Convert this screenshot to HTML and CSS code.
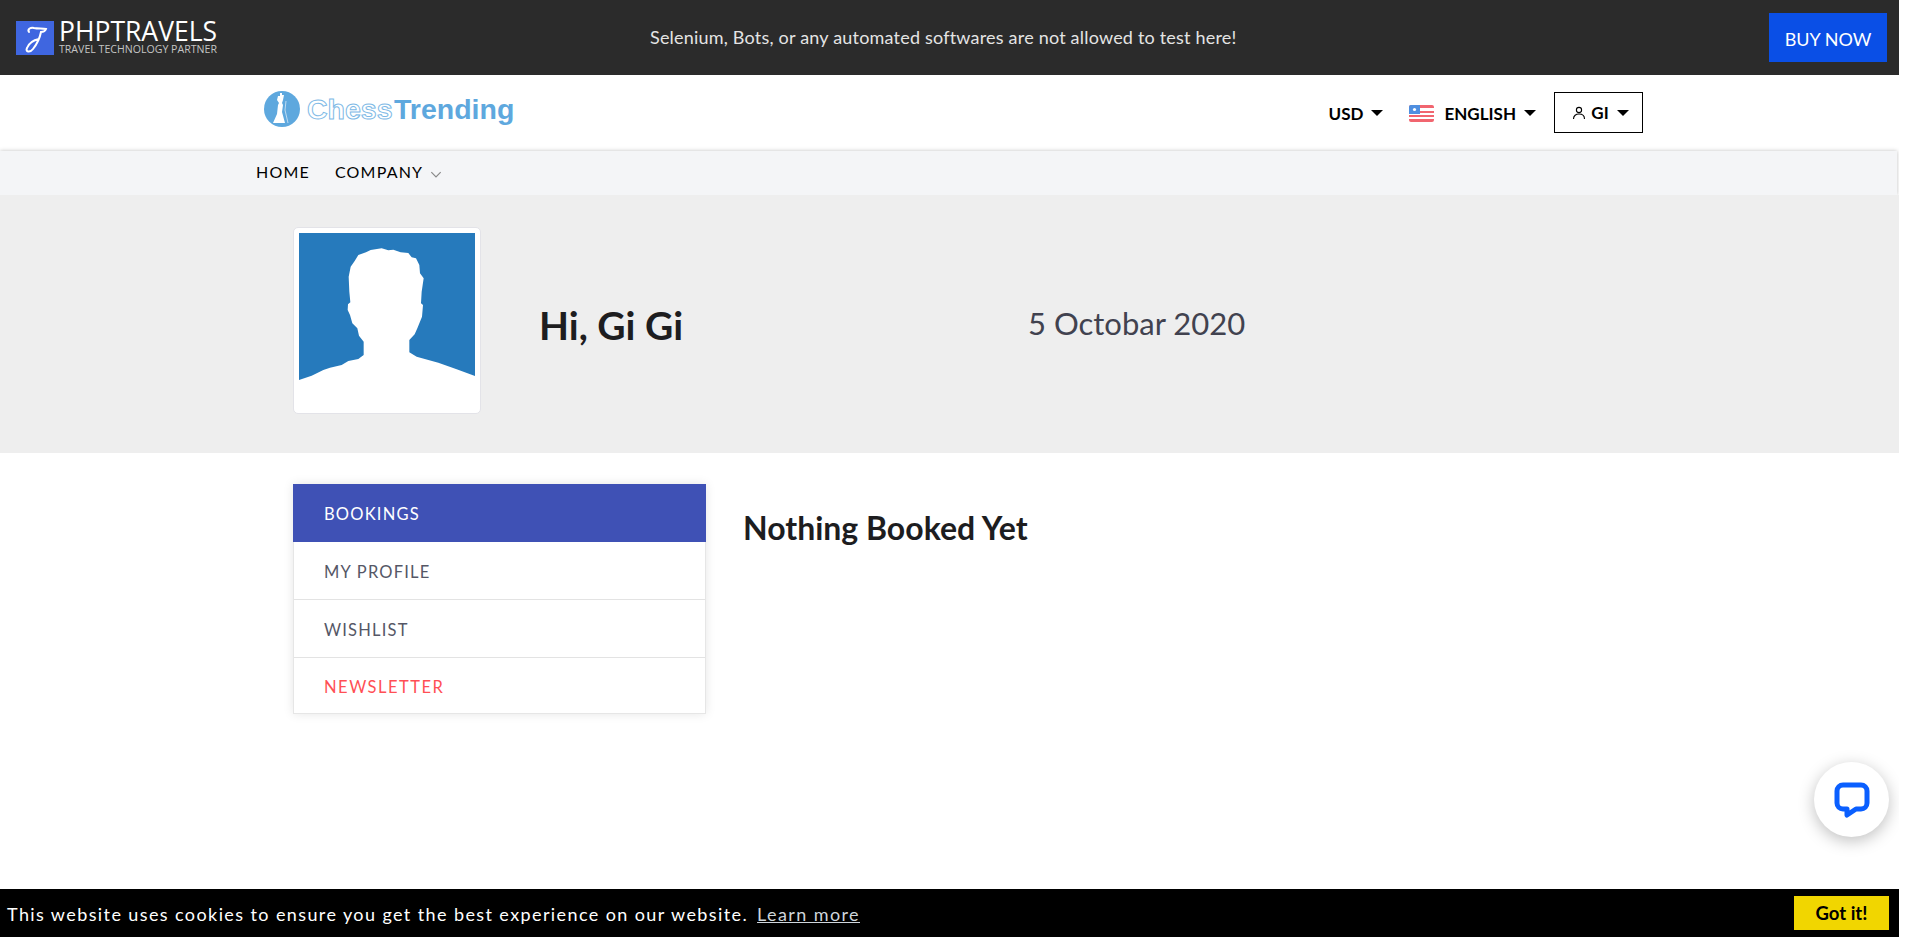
FILE: index.html
```html
<!DOCTYPE html>
<html lang="en">
<head>
    <meta charset="UTF-8">
    <meta name="viewport" content="width=device-width, initial-scale=1.0">
    <title>Dashboard</title>
    <link rel="stylesheet" href="styles.css">
</head>
<body>
    <div class="page">
        <div class="topbar">
            <a class="php-logo" href="#">
                <svg class="php-mark" viewBox="0 0 38 34">
                    <rect width="38" height="34" fill="#3f66e0"/>
                    <path d="M13 11c-2-3 2-5 5-4 4 1 9 0 12 1-1 3-3 3-5 3-1 5-4 12-8 17-3 4-8 3-6-1 2-5 7-8 12-9" fill="none" stroke="#fff" stroke-width="2" stroke-linecap="round"/>
                </svg>
                <span class="php-text">
                    <span class="php-name">PHPTRAVELS</span>
                    <span class="php-sub">TRAVEL TECHNOLOGY PARTNER</span>
                </span>
            </a>
            <div class="topbar-msg">Selenium, Bots, or any automated softwares are not allowed to test here!</div>
            <a class="buy-btn" href="#">BUY NOW</a>
        </div>

        <header class="mainbar">
            <a class="chess-logo" href="#">
                <svg viewBox="0 0 256 40" width="256" height="40">
                    <circle cx="18" cy="19" r="18" fill="#5ea8de"/>
                    <path d="M16 3h2v2h2l-1 5-1 3 1 2-1 7 3 11H9l4-9 1-9 1-2-2-3 1-4h2z" fill="#fff"/>
                    <path d="M22 11l-1 9 3 13" fill="none" stroke="#d5e8f6" stroke-width="0.8"/>
                    <text class="chess-word" x="43" y="29">Chess</text>
                    <text class="trending-word" x="130" y="29">Trending</text>
                </svg>
            </a>
            <div class="mainbar-right">
                <a class="drop" href="#">USD <span class="caret"></span></a>
                <a class="drop drop-lang" href="#">
                    <svg class="flag" viewBox="0 0 25 17">
                        <rect width="25" height="17" rx="2" fill="#fff"/>
                        <path d="M0 2a2 2 0 0 1 2-2h21a2 2 0 0 1 2 2v1H0zM0 6h25v2H0zM0 10h25v2H0zM0 14h25v1a2 2 0 0 1-2 2H2a2 2 0 0 1-2-2z" fill="#f1656f"/>
                        <path d="M0 2a2 2 0 0 1 2-2h9v9H0z" fill="#4f8fe0"/>
                        <circle cx="5.5" cy="4.500" r="1.6" fill="#fff"/>
                    </svg>
                    ENGLISH <span class="caret"></span>
                </a>
                <a class="drop user-box" href="#">
                    <svg class="user-icon" viewBox="0 0 14 14">
                        <circle cx="7" cy="4" r="2.6" fill="none" stroke="#000" stroke-width="1.1"/>
                        <path d="M1.5 13c0-3.4 2.4-5 5.500-5s5.500 1.600 5.500 5" fill="none" stroke="#000" stroke-width="1.1"/>
                    </svg>
                    GI <span class="caret"></span>
                </a>
            </div>
        </header>

        <nav class="menubar">
            <a href="#">HOME</a>
            <a href="#">COMPANY <svg class="chev" viewBox="0 0 10 6"><path d="M1 1l4 4 4-4" fill="none" stroke="#888" stroke-width="1"/></svg></a>
        </nav>

        <section class="hero">
            <div class="avatar">
                <svg viewBox="57 54 528 528" width="176" height="176">
                    <rect x="57" y="54" width="528" height="528" fill="#267abc"/>
                    <path d="M57 495L95 482 130 465 150 458 185 450 205 438 235 432 251 420 251 380 237 362 232 340 217 325 210 300 203 285 204 268 211 262 208 230 206 185 212 155 224 138 235 120 258 112 272 105 305 100 325 106 340 104 362 112 385 114 395 127 408 130 418 150 420 175 431 190 425 230 423 265 429 270 426 305 412 340 404 358 388 375 388 412 410 425 475 443 530 463 585 483 585 582 57 582Z" fill="#fff"/>
                </svg>
            </div>
            <h1 class="hero-name">Hi, Gi Gi</h1>
            <div class="hero-date">5 Octobar 2020</div>
        </section>

        <main class="content">
            <ul class="side-menu">
                <li class="active"><a href="#">BOOKINGS</a></li>
                <li><a href="#">MY PROFILE</a></li>
                <li><a href="#">WISHLIST</a></li>
                <li class="danger"><a href="#">NEWSLETTER</a></li>
            </ul>
            <h2 class="empty-title">Nothing Booked Yet</h2>
        </main>

        <a class="chat-btn" href="#">
            <svg viewBox="0 0 36 36" width="36" height="36">
                <path d="M9 3h18a6 6 0 0 1 6 6v12a6 6 0 0 1-6 6h-5l-9 6v-6H9a6 6 0 0 1-6-6V9a6 6 0 0 1 6-6z" fill="none" stroke="#0a5fff" stroke-width="5" stroke-linejoin="round"/>
            </svg>
        </a>

        <div class="cookie-bar">
            <span class="cookie-msg">This website uses cookies to ensure you get the best experience on our website. <a href="#">Learn more</a></span>
            <a class="cookie-btn" href="#">Got it!</a>
        </div>
    </div>
</body>
</html>
```

FILE: styles.css
```css
:root {
    --text-font: Lato, "Open Sans", sans-serif;
    --dark: #2b2b2b;
    --menu-bg: #f4f5f7;
    --hero-bg: #eeeeee;
    --indigo: #3f51b5;
}

* {
    box-sizing: border-box;
}

html, body {
    margin: 0;
    background: #fff;
}

body {
    font-family: var(--text-font);
    color: #000;
    overflow: hidden;
}

a {
    color: inherit;
    text-decoration: none;
}

.page {
    position: relative;
    width: 1899px;
    height: 937px;
    overflow: hidden;
}

/* top strip */
.topbar {
    display: flex;
    align-items: center;
    height: 75px;
    padding: 0 12px 0 16px;
    background: var(--dark);
}

.php-logo {
    display: flex;
    align-items: center;
    gap: 5px;
    width: 202px;
    white-space: nowrap;
}

.php-mark {
    width: 38px;
    height: 34px;
}

.php-text {
    display: flex;
    flex-direction: column;
    font-family: "Open Sans", sans-serif;
}

.php-name {
    font-size: 26.500px;
    line-height: 24px;
    color: #fff;
}

.php-sub {
    font-size: 10.6px;
    line-height: 13px;
    color: #c4c4c4;
}

.topbar-msg {
    margin: -2px 0 0 432px;
    font-size: 18px;
    letter-spacing: 0.2px;
    color: #e4e4e4;
    white-space: nowrap;
}

.buy-btn {
    display: flex;
    align-items: center;
    justify-content: center;
    width: 118px;
    height: 49px;
    margin-left: auto;
    padding-top: 3px;
    background: #0a4fe6;
    color: #fff;
    font-size: 18px;
}

/* logo row */
.mainbar {
    display: flex;
    align-items: center;
    justify-content: space-between;
    height: 76px;
    padding: 0 256px 0 264px;
}

.chess-logo {
    display: block;
    height: 40px;
    margin-top: -6px;
}

.chess-word, .trending-word {
    font-family: "Liberation Sans", Arial, sans-serif;
    font-weight: 700;
    font-size: 28.500px;
}

.chess-word {
    fill: #fff;
    stroke: #7db9e6;
    stroke-width: 1;
}

.trending-word {
    fill: #5ea8de;
}

.mainbar-right {
    display: flex;
    align-items: center;
}

.drop {
    display: flex;
    align-items: center;
    font-size: 17px;
    font-weight: 700;
    color: #000;
}

.drop-lang {
    margin-left: 26px;
}

.flag {
    width: 25px;
    height: 17px;
    margin-right: 10px;
}

.caret {
    display: inline-block;
    width: 0;
    height: 0;
    margin-left: 8px;
    border-left: 6px solid transparent;
    border-right: 6px solid transparent;
    border-top: 6px solid #000;
}

.user-box {
    justify-content: center;
    width: 89px;
    height: 41px;
    margin-left: 18px;
    margin-top: -1px;
    padding-left: 4px;
    border: 1px solid #000;
}

.user-icon {
    width: 14px;
    height: 14px;
    margin-right: 5px;
}

/* menu */
.menubar {
    position: relative;
    display: flex;
    align-items: center;
    gap: 25px;
    width: 1897px;
    height: 44px;
    padding: 0 0 4px 256px;
    background: var(--menu-bg);
    box-shadow: 0 0 4px rgba(0,0,0,0.25);
    font-size: 16px;
    letter-spacing: 1.2px;
}

.chev {
    width: 12px;
    height: 7px;
    margin-left: 2px;
}

/* hero */
.hero {
    position: relative;
    display: flex;
    align-items: flex-start;
    height: 258px;
    padding: 32px 0 0 293px;
    background: var(--hero-bg);
}

.avatar {
    width: 188px;
    height: 187px;
    padding: 5px 0 0 5px;
    background: #fff;
    border: 1px solid #e3e3e8;
    border-radius: 5px;
}

.avatar svg {
    display: block;
}

.hero-name {
    width: 489px;
    margin: 74px 0 0 58px;
    font-size: 39px;
    line-height: 48px;
    font-weight: 700;
    color: #1d1d1f;
}

.hero-date {
    margin-top: 76px;
    font-size: 31px;
    line-height: 40px;
    color: #41424f;
}

/* body */
.content {
    display: flex;
    align-items: flex-start;
    padding: 31px 0 0 293px;
}

.side-menu {
    width: 413px;
    margin: 0;
    padding: 0;
    list-style: none;
    border: 1px solid #e6e6e6;
    border-top: 0;
    box-shadow: 0 0 10px rgba(0,0,0,0.1);
}

.side-menu li {
    height: 58px;
    border-bottom: 1px solid #e3e3e3;
}

.side-menu li:last-child {
    height: 55px;
    border-bottom: 0;
}

.side-menu a {
    display: flex;
    align-items: center;
    height: 100%;
    padding: 2px 0 0 30px;
    font-size: 16.500px;
    letter-spacing: 1.2px;
    color: #555766;
}

.side-menu .active {
    margin: 0 -1px;
    background: var(--indigo);
    border-bottom: 0;
}

.side-menu .active a {
    padding-left: 31px;
    color: #fff;
}

.side-menu .danger a {
    color: #ff4f55;
    letter-spacing: 1.5px;
}

.empty-title {
    margin: 24px 0 0 37px;
    font-size: 32px;
    font-weight: 700;
    color: #1d1d1f;
}

/* floating things */
.chat-btn {
    position: absolute;
    top: 762px;
    left: 1814px;
    display: flex;
    align-items: center;
    justify-content: center;
    width: 75px;
    height: 75px;
    background: #fff;
    border-radius: 50%;
    box-shadow: 0 4px 16px rgba(0,0,0,0.25);
}

.cookie-bar {
    position: absolute;
    left: 0;
    right: 0;
    bottom: 0;
    display: flex;
    align-items: center;
    justify-content: space-between;
    height: 48px;
    padding: 0 10px 0 7px;
    background: #000;
    color: #fff;
    font-size: 18px;
    letter-spacing: 1.4px;
}

.cookie-msg {
    padding-top: 2px;
}

.cookie-msg a {
    margin-left: 3px;
    text-decoration: underline;
    color: #cfd6dc;
}

.cookie-btn {
    display: flex;
    align-items: center;
    justify-content: center;
    width: 95px;
    height: 34px;
    background: #f1d600;
    color: #000;
    font-size: 18.500px;
    font-weight: 700;
    letter-spacing: 0;
}
```
